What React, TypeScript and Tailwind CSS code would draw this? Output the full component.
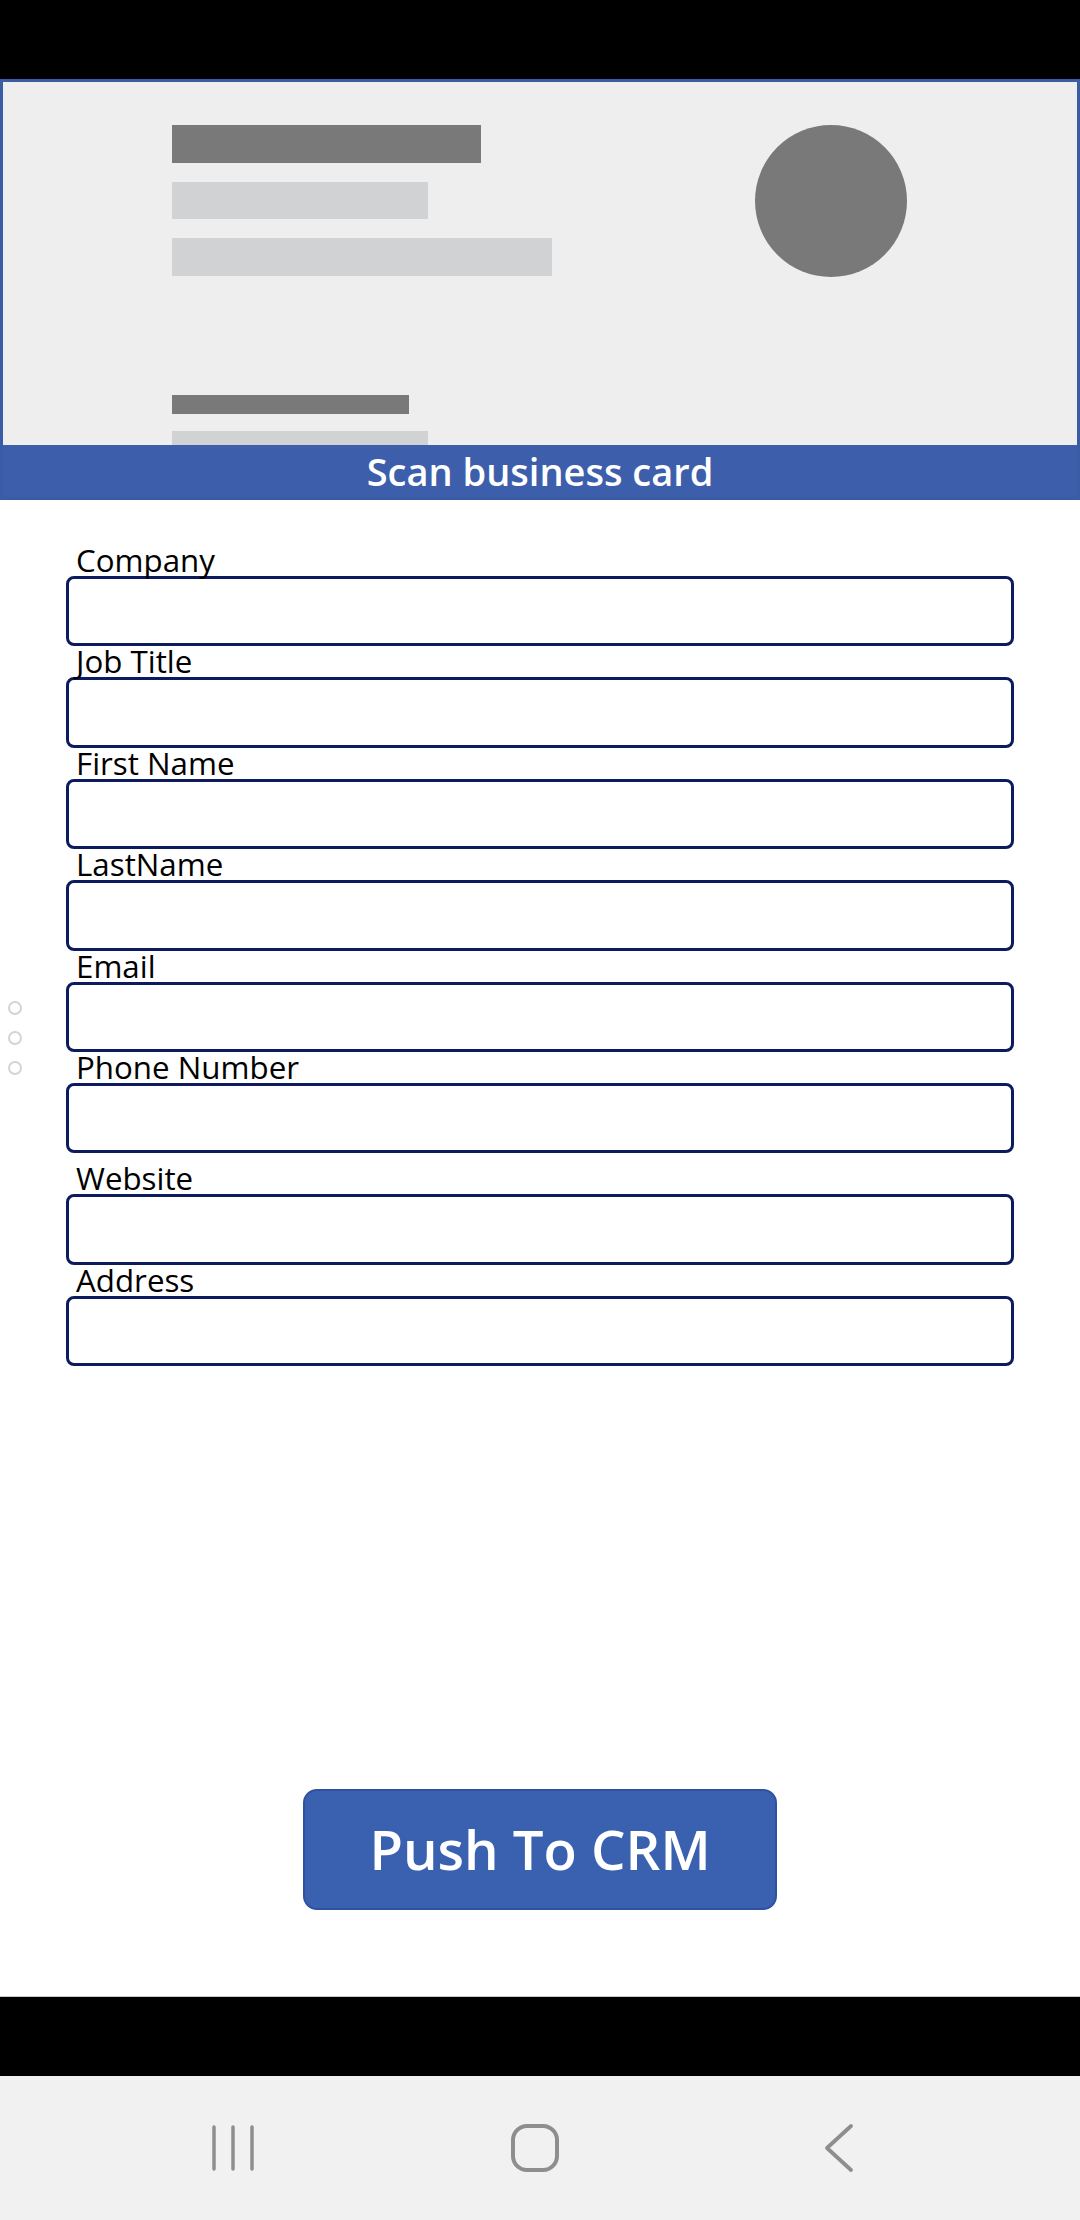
const fields = [
  "Company",
  "Job Title",
  "First Name",
  "LastName",
  "Email",
  "Phone Number",
  "Website",
  "Address",
];

function Field({ label, extra }: { label: string; extra?: boolean }) {
  return (
    <div className={extra ? "mt-[10px]" : ""}>
      <div className="h-[31px] pl-[10px] text-[31.3px] leading-[31px] text-black whitespace-nowrap">
        {label}
      </div>
      <div className="h-[70.4px] rounded-[8px] border-[3px] border-[#0b1b5e] bg-white" />
    </div>
  );
}

function CardPreview() {
  return (
    <div className="h-[421px] border-[3px] border-[#3a5ba5] flex flex-col">
      <div className="h-[363px] shrink-0 bg-[#eeeeee] overflow-hidden flex pt-[43px] pl-[169px]">
        <div className="w-[380px] shrink-0 flex flex-col">
          <div className="h-[38px] w-[309px] shrink-0 bg-[#79797a]" />
          <div className="mt-[19px] h-[37px] w-[256px] shrink-0 bg-[#d1d2d4]" />
          <div className="mt-[19px] h-[38px] w-[380px] shrink-0 bg-[#d1d2d4]" />
          <div className="mt-[119px] h-[19px] w-[237px] shrink-0 bg-[#79797a]" />
          <div className="mt-[17px] h-[38px] w-[256px] shrink-0 bg-[#d1d2d4]" />
        </div>
        <div className="ml-[203px] h-[152px] w-[152px] shrink-0 rounded-full bg-[#79797a]" />
      </div>
      <div className="flex-1 bg-[#3d5fab] flex items-center justify-center">
        <span className="font-['Open_Sans',sans-serif] font-semibold text-[38px] leading-none text-white">
          Scan business card
        </span>
      </div>
    </div>
  );
}

function NavBar() {
  return (
    <div className="h-[144px] bg-[#f1f1f1] flex items-center pl-[211px]">
      <svg width="44" height="48" viewBox="0 0 44 48" fill="none" stroke="#8e8e8e" strokeWidth="3.5" strokeLinecap="round">
        <line x1="3" y1="3" x2="3" y2="45" />
        <line x1="22" y1="3" x2="22" y2="45" />
        <line x1="41" y1="3" x2="41" y2="45" />
      </svg>
      <svg className="ml-[254px]" width="52" height="52" viewBox="0 0 52 52" fill="none" stroke="#8e8e8e" strokeWidth="4">
        <rect x="4" y="4" width="44" height="44" rx="14" />
      </svg>
      <svg className="ml-[262px]" width="32" height="50" viewBox="0 0 32 50" fill="none" stroke="#8e8e8e" strokeWidth="3.8" strokeLinecap="round" strokeLinejoin="round">
        <polyline points="28,3 4,25 28,47" />
      </svg>
    </div>
  );
}

export default function App() {
  return (
    <div className="relative h-[2220px] w-[1080px] flex flex-col bg-white font-['Open_Sans',sans-serif]">
      <div className="h-[79px] shrink-0 bg-black" />
      <CardPreview />

      <div className="mt-[45px] px-[66px] flex flex-col">
        {fields.map((f) => (
          <Field key={f} label={f} extra={f === "Website"} />
        ))}
      </div>

      <div className="flex-1 flex justify-center pt-[423px]">
        <button className="h-[121px] w-[474px] rounded-[14px] border-2 border-[#2f51a0] bg-[#3961b0] text-white font-semibold text-[54.5px] leading-none">
          Push To CRM
        </button>
      </div>

      <div className="h-[1px] bg-[#c8c8c8]" />
      <div className="h-[79px] bg-black" />
      <NavBar />

      {/* scroll dots on the left edge */}
      <div className="absolute left-[8px] top-[1001px] flex flex-col gap-[16px]">
        <div className="h-[14px] w-[14px] rounded-full border-2 border-[#d4d4d4]" />
        <div className="h-[14px] w-[14px] rounded-full border-2 border-[#d4d4d4]" />
        <div className="h-[14px] w-[14px] rounded-full border-2 border-[#d4d4d4]" />
      </div>
    </div>
  );
}
